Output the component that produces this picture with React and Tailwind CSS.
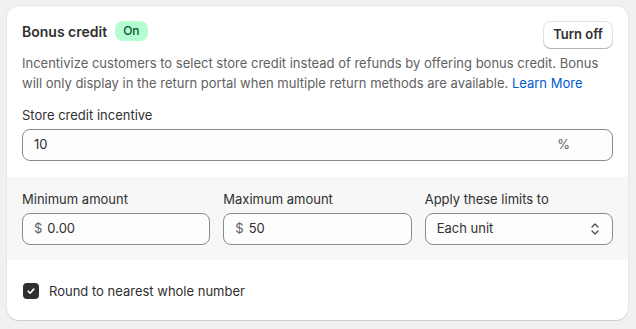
import React from 'react';

const font = { fontFamily: 'Inter, "Noto Sans", sans-serif' };

function MoneyField({ value }) {
  return (
    <div className="flex h-8 items-center rounded-lg border border-[#8a8a8a] bg-[#fdfdfd] px-[11px] text-[13px] text-[#303030]">
      <span className="mr-[5px] text-[#616161]">$</span>
      <span>{value}</span>
    </div>
  );
}

export default function App() {
  return (
    <div className="min-h-[329px] bg-[#f1f1f1] pt-[6px] pl-[7px]" style={font}>
      <div className="w-[621px] overflow-hidden rounded-xl bg-white shadow-[0_1px_0_0_#d0d0d0,0_0_0_1px_#e6e6e6]">
        <div className="px-[15px] pt-[15px] pb-4">
          <div className="flex h-[28px] items-start justify-between">
            <div className="flex h-[20px] items-center gap-2">
              <h2 className="text-[14px] font-semibold text-[#303030]">Bonus credit</h2>
              <span className="rounded-lg bg-[#b4fed2] px-2 text-[12px] leading-[20px] font-medium text-[#0c5132]">On</span>
            </div>
            <button className="h-[28px] w-[70px] rounded-lg bg-white text-[13px] font-semibold text-[#303030] shadow-[inset_0_-1px_0_0_#b5b5b5,inset_0_0_0_1px_#e3e3e3]">
              Turn off
            </button>
          </div>
          <p className="mt-[4px] text-[13px] leading-[20px] text-[#616161]">
            Incentivize customers to select store credit instead of refunds by offering bonus credit. Bonus will only display in the return portal when multiple return methods are available.{' '}
            <a className="text-[#005bd3]">Learn More</a>
          </p>
          <label className="mt-[12px] block text-[13px] leading-[20px] text-[#303030]">Store credit incentive</label>
          <div className="mt-[4px] flex h-8 items-center justify-between rounded-lg border border-[#8a8a8a] bg-[#fdfdfd] pl-[11px] pr-[42px] text-[13px] text-[#303030]">
            <span>10</span>
            <span className="text-[#616161]">%</span>
          </div>
        </div>

        <div className="grid grid-cols-3 gap-[13px] bg-[#f7f7f7] px-[15px] pt-[12px] pb-[15px]">
          <div>
            <label className="block text-[13px] leading-[20px] text-[#303030]">Minimum amount</label>
            <div className="mt-[4px]"><MoneyField value="0.00" /></div>
          </div>
          <div>
            <label className="block text-[13px] leading-[20px] text-[#303030]">Maximum amount</label>
            <div className="mt-[4px]"><MoneyField value="50" /></div>
          </div>
          <div>
            <label className="block text-[13px] leading-[20px] text-[#303030]">Apply these limits to</label>
            <div className="mt-[4px] flex h-8 items-center justify-between rounded-lg border border-[#8a8a8a] bg-[#fdfdfd] pl-[11px] pr-[12px] text-[13px] text-[#303030]">
              <span>Each unit</span>
              <svg width="10" height="14" viewBox="0 0 10 14" fill="none" stroke="#4a4a4a" strokeWidth="1.3" strokeLinecap="round" strokeLinejoin="round">
                <path d="M2 5l3-3 3 3" />
                <path d="M2 9l3 3 3-3" />
              </svg>
            </div>
          </div>
        </div>

        <div className="flex items-center gap-[10px] px-[16px] pt-[21px] pb-[19px]">
          <span className="flex h-[16px] w-[16px] items-center justify-center rounded-[4px] bg-[#303030]">
            <svg width="10" height="10" viewBox="0 0 10 10" fill="none" stroke="white" strokeWidth="1.6" strokeLinecap="round" strokeLinejoin="round">
              <path d="M2.2 5.2l1.9 1.9 3.7-4" />
            </svg>
          </span>
          <span className="text-[13px] leading-[20px] text-[#303030]">Round to nearest whole number</span>
        </div>
      </div>
    </div>
  );
}
